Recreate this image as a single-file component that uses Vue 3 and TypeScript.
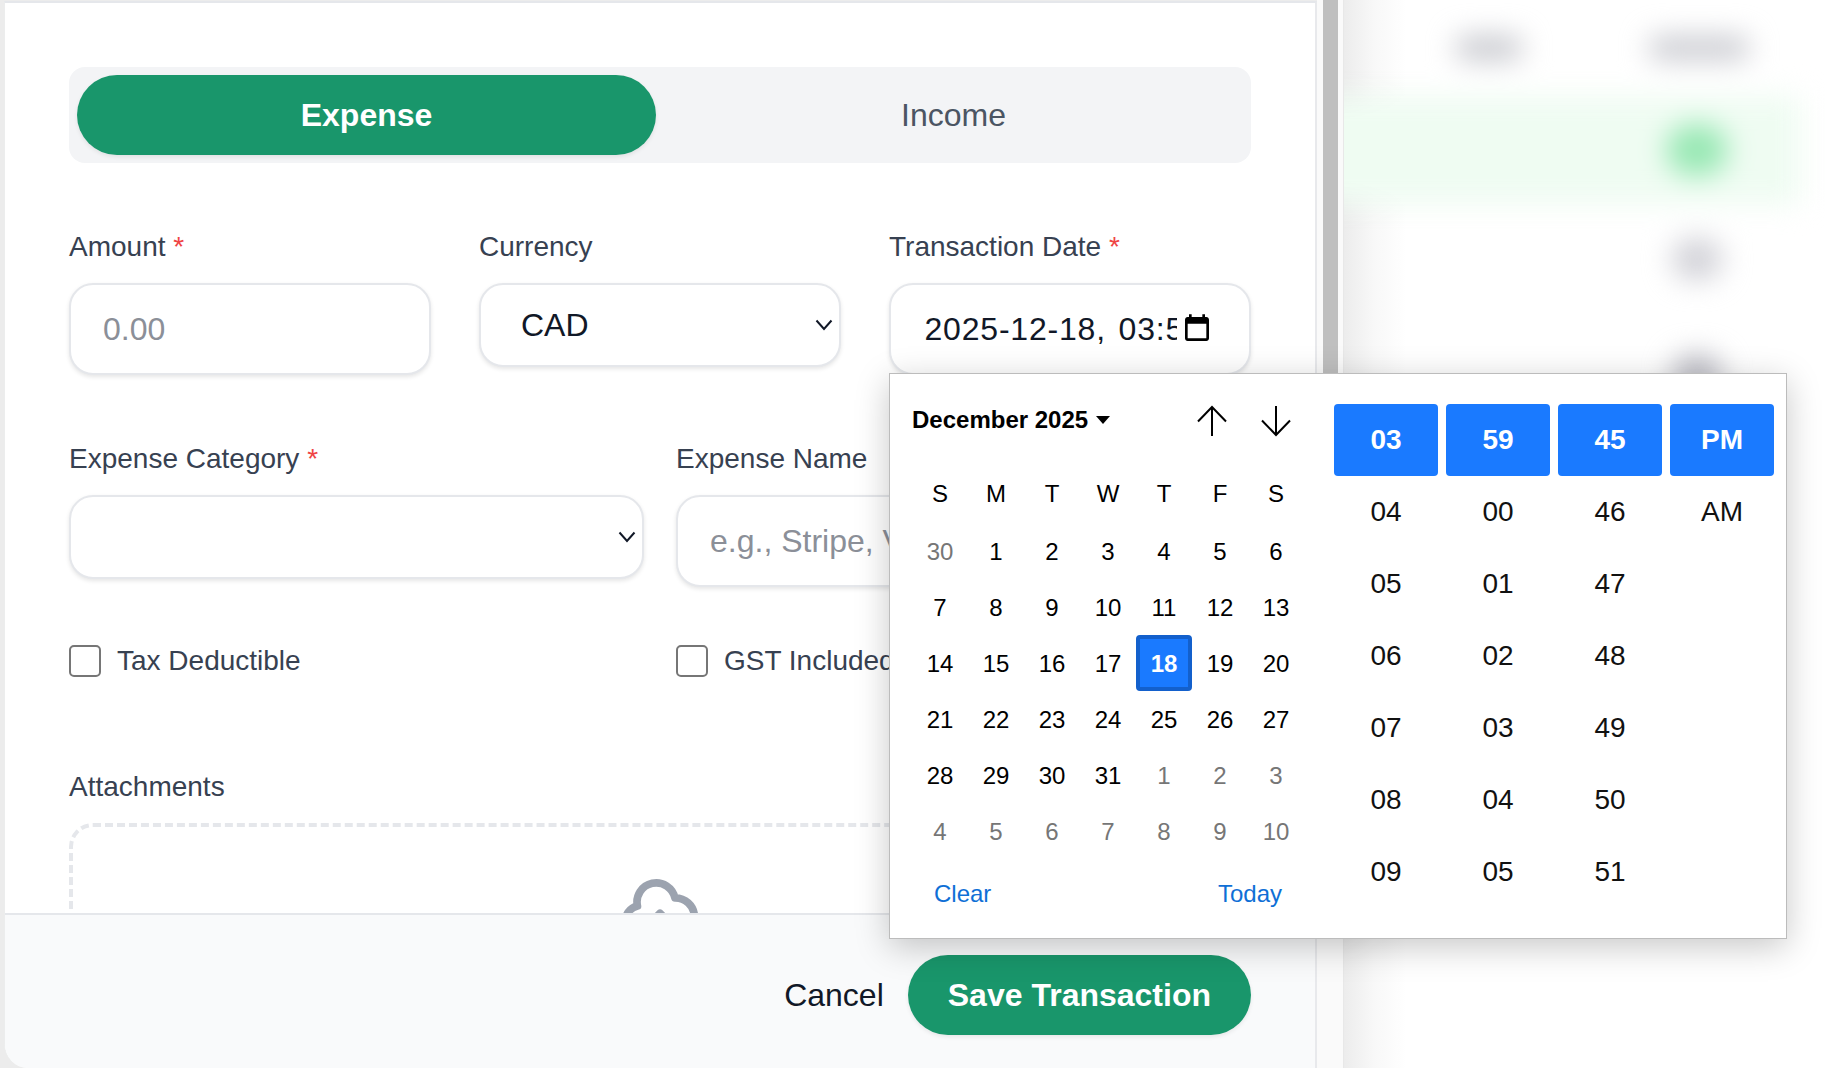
<script setup lang="ts">
// define type section
type Day = {
  label: number
  muted?: boolean
  selected?: boolean
}

type TimeColumn = {
  active: string
  rest: string[]
}

// define variable section
const weekdays: string[] = ['S', 'M', 'T', 'W', 'T', 'F', 'S']

const makeDays = (): Day[] => {
  const days: Day[] = [{ label: 30, muted: true }]
  for (let i = 1; i <= 31; i++) {
    days.push({ label: i, selected: i === 18 })
  }
  for (let i = 1; i <= 10; i++) {
    days.push({ label: i, muted: true })
  }
  return days
}
const days = makeDays()

const timeColumns: TimeColumn[] = [
  { active: '03', rest: ['04', '05', '06', '07', '08', '09'] },
  { active: '59', rest: ['00', '01', '02', '03', '04', '05'] },
  { active: '45', rest: ['46', '47', '48', '49', '50', '51'] },
  { active: 'PM', rest: ['AM'] }
]
</script>

<template>
  <div class="page">
    <div class="edge"></div>

    <div class="panel">
      <div class="scroll">
        <div class="toggle">
          <button class="toggle_btn toggle_on">Expense</button>
          <button class="toggle_btn">Income</button>
        </div>

        <div class="row_three">
          <div>
            <label class="label">Amount <span class="req">*</span></label>
            <input class="field" placeholder="0.00" />
          </div>
          <div>
            <label class="label">Currency</label>
            <div class="select">
              <span>CAD</span>
              <svg class="chevron" viewBox="0 0 18 12" width="18" height="12">
                <path d="M1.5 1.5 9 10l7.500-8.500" fill="none" stroke="#111827" stroke-width="2" />
              </svg>
            </div>
          </div>
          <div>
            <label class="label">Transaction Date <span class="req">*</span></label>
            <div class="field date_field">
              <span class="date_text">2025-12-18, 03:59:45 PM</span>
              <svg class="cal_icon" viewBox="0 0 24 24" width="32" height="32">
                <path d="M19 3h-1V1h-2v2H8V1H6v2H5c-1.110 0-1.990.9-1.990 2L3 19c0 1.100.89 2 2 2h14c1.100 0 2-.9 2-2V5c0-1.100-.9-2-2-2zm0 16H5V8h14v11z" fill="#000" />
              </svg>
            </div>
          </div>
        </div>

        <div class="row_two">
          <div>
            <label class="label">Expense Category <span class="req">*</span></label>
            <div class="select">
              <span></span>
              <svg class="chevron" viewBox="0 0 18 12" width="18" height="12">
                <path d="M1.5 1.500 9 10l7.500-8.500" fill="none" stroke="#111827" stroke-width="2" />
              </svg>
            </div>
          </div>
          <div>
            <label class="label">Expense Name</label>
            <input class="field" placeholder="e.g., Stripe, Vendor" />
          </div>
        </div>

        <div class="row_checks">
          <div class="check"><span class="check_box"></span>Tax Deductible</div>
          <div class="check"><span class="check_box"></span>GST Included</div>
        </div>

        <label class="label attach_label">Attachments</label>
        <div class="dropzone">
          <svg viewBox="0 0 24 24" width="92" height="92">
            <path
              d="M7 16a4 4 0 01-.88-7.903A5 5 0 1115.900 6L16 6a5 5 0 011 9.900M15 13l-3-3m0 0l-3 3m3-3v12"
              fill="none"
              stroke="#9ca3af"
              stroke-width="2"
              stroke-linecap="round"
              stroke-linejoin="round"
            />
          </svg>
        </div>
      </div>

      <div class="footer">
        <button class="cancel">Cancel</button>
        <button class="save">Save Transaction</button>
      </div>
    </div>

    <div class="track"><div class="thumb"></div></div>

    <!-- blurred list behind the dialog -->
    <div class="behind">
      <div class="blobs">
        <div class="blob head_a"></div>
        <div class="blob head_b"></div>
        <div class="blob green_row"></div>
        <div class="blob green_dot"></div>
        <div class="blob grey_a"></div>
        <div class="blob grey_b"></div>
      </div>
    </div>

    <!-- date picker popup -->
    <div class="popup">
      <div class="calendar">
        <div class="cal_head">
          <span class="month">December 2025</span>
          <svg class="caret" viewBox="0 0 14 8" width="14" height="8"><path d="M0 0h14L7 8z" fill="#000" /></svg>
          <span class="cal_spacer"></span>
          <svg class="arrow" viewBox="0 0 32 32" width="32" height="32">
            <path d="M16 31V2M2 16.500 16 2l14 14.500" fill="none" stroke="#000" stroke-width="2" />
          </svg>
          <svg class="arrow" viewBox="0 0 32 32" width="32" height="32">
            <path d="M16 1v29M2 15.500 16 30l14-14.500" fill="none" stroke="#000" stroke-width="2" />
          </svg>
        </div>
        <div class="cal_grid">
          <div v-for="(w, i) in weekdays" :key="'w' + i" class="cell weekday">{{ w }}</div>
          <div
            v-for="(d, i) in days"
            :key="'d' + i"
            class="cell day"
            :class="{ muted: d.muted, selected: d.selected }"
          >
            {{ d.label }}
          </div>
        </div>
        <div class="cal_foot">
          <span>Clear</span>
          <span>Today</span>
        </div>
      </div>

      <div class="times">
        <div v-for="col in timeColumns" :key="col.active" class="time_col">
          <div class="time_cell time_on">{{ col.active }}</div>
          <div v-for="t in col.rest" :key="t" class="time_cell">{{ t }}</div>
        </div>
      </div>
    </div>
  </div>
</template>

<style>
html,
body {
  margin: 0;
  background: #fff;
}
</style>

<style scoped>
.page {
  position: relative;
  display: flex;
  width: 1840px;
  height: 1068px;
  overflow: hidden;
  background: #ececec;
  font-family: "Liberation Sans", Arial, sans-serif;
  color: #111827;
}
.edge {
  width: 4px;
  flex: none;
}

/* dialog */
.panel {
  width: 1313px;
  flex: none;
  box-sizing: border-box;
  display: flex;
  flex-direction: column;
  background: #fff;
  border-top: 2px solid #e5e7eb;
  border-left: 1px solid #eceded;
  border-right: 2px solid #e8e9ec;
  margin-top: 1px;
  border-bottom-left-radius: 24px;
  overflow: hidden;
}
.scroll {
  flex: 1;
  min-height: 0;
  overflow: hidden;
  padding: 64px 64px 0;
}
.toggle {
  display: flex;
  gap: 8px;
  padding: 8px;
  background: #f3f4f6;
  border-radius: 16px;
}
.toggle_btn {
  flex: 1;
  height: 80px;
  border: 0;
  border-radius: 40px;
  background: transparent;
  font: 32px "Liberation Sans", Arial, sans-serif;
  color: #4b5563;
}
.toggle_on {
  background: #19966b;
  color: #fff;
  font-weight: 700;
  box-shadow: 0 2px 4px rgba(0, 0, 0, 0.08);
}
.row_three {
  display: grid;
  grid-template-columns: repeat(3, minmax(0, 1fr));
  gap: 48px;
  margin-top: 64px;
}
.row_two {
  display: grid;
  grid-template-columns: repeat(2, minmax(0, 1fr));
  gap: 32px;
  margin-top: 64px;
}
.label {
  display: block;
  font-size: 28px;
  line-height: 40px;
  margin-bottom: 16px;
  color: #374151;
}
.req {
  color: #ef4444;
}
.field {
  display: block;
  box-sizing: border-box;
  width: 100%;
  height: 92px;
  padding: 0 32px;
  background: #fff;
  border: 2px solid #e5e7eb;
  border-radius: 24px;
  box-shadow: 0 2px 4px rgba(0, 0, 0, 0.1);
  font: 32px "Liberation Sans", Arial, sans-serif;
  color: #111827;
  outline: none;
}
.field::placeholder {
  color: #8b8f98;
  opacity: 1;
}
.date_field {
  display: flex;
  align-items: center;
  padding: 0 36px 0 33.500px;
}
.date_text {
  flex: 1;
  min-width: 0;
  overflow: hidden;
  white-space: nowrap;
  letter-spacing: 0.8px;
  word-spacing: 3px;
}
.cal_icon {
  flex: none;
  margin-left: 4px;
}
.select {
  box-sizing: border-box;
  display: flex;
  align-items: center;
  justify-content: space-between;
  height: 84px;
  padding: 0 6px 0 40px;
  background: #fff;
  border: 2px solid #e5e7eb;
  border-radius: 24px;
  box-shadow: 0 2px 4px rgba(0, 0, 0, 0.1);
  font-size: 32px;
}
.row_checks {
  display: grid;
  grid-template-columns: repeat(2, minmax(0, 1fr));
  gap: 32px;
  margin-top: 54px;
}
.check {
  display: flex;
  align-items: center;
  gap: 16px;
  height: 40px;
  font-size: 28px;
  color: #374151;
  white-space: nowrap;
}
.check_box {
  box-sizing: border-box;
  width: 32px;
  height: 32px;
  flex: none;
  border: 2px solid #767676;
  border-radius: 5px;
  background: #fff;
}
.attach_label {
  margin-top: 86px;
}
.dropzone {
  box-sizing: border-box;
  height: 320px;
  border: 4px dashed #e5e7eb;
  border-radius: 24px;
  display: flex;
  justify-content: center;
  padding-top: 48px;
}
.footer {
  flex: none;
  box-sizing: border-box;
  height: 155px;
  display: flex;
  justify-content: flex-end;
  align-items: flex-start;
  gap: 24px;
  padding: 40px 64px 0;
  background: #f9fafb;
  border-top: 2px solid #e5e7eb;
}
.cancel {
  height: 80px;
  padding: 0;
  border: 0;
  background: transparent;
  font: 32px "Liberation Sans", Arial, sans-serif;
  color: #111827;
}
.save {
  height: 80px;
  padding: 0 40px;
  border: 0;
  border-radius: 40px;
  background: #19966b;
  color: #fff;
  font: 700 32px "Liberation Sans", Arial, sans-serif;
  box-shadow: 0 2px 4px rgba(0, 0, 0, 0.08);
}

/* scrollbar of the dialog */
.track {
  width: 27px;
  flex: none;
  box-sizing: border-box;
  padding: 0 5px 0 6px;
  background: #fafafa;
  border-right: 1px solid #e8e8e8;
}
.thumb {
  height: 640px;
  background: #bfbfbf;
}

/* page behind */
.behind {
  position: relative;
  flex: 1;
  overflow: hidden;
  background: linear-gradient(90deg, #ececec, #f8f8f8 30px, #fff 62px);
}
.blobs {
  position: absolute;
  inset: 0;
  filter: blur(14px);
}
.blob {
  position: absolute;
}
.head_a {
  left: 112px;
  top: 36px;
  width: 66px;
  height: 24px;
  border-radius: 10px;
  background: #c6c7cd;
}
.head_b {
  left: 305px;
  top: 36px;
  width: 100px;
  height: 24px;
  border-radius: 10px;
  background: #c9cad0;
}
.green_row {
  left: -40px;
  top: 96px;
  width: 496px;
  height: 108px;
  background: #effcf2;
}
.green_dot {
  left: 322px;
  top: 124px;
  width: 62px;
  height: 52px;
  border-radius: 26px;
  background: #98e8b4;
}
.grey_a {
  left: 328px;
  top: 238px;
  width: 50px;
  height: 42px;
  border-radius: 20px;
  background: #d2d2d8;
}
.grey_b {
  left: 328px;
  top: 354px;
  width: 50px;
  height: 42px;
  border-radius: 20px;
  background: #bebec6;
}

/* popup */
.popup {
  position: absolute;
  left: 889px;
  top: 373px;
  box-sizing: border-box;
  width: 898px;
  height: 566px;
  display: flex;
  padding: 30px 11px 0 22px;
  background: #fff;
  border: 1px solid #bcbcbc;
  box-shadow: 0 8px 32px rgba(0, 0, 0, 0.22);
  color: #000;
}
.calendar {
  width: 392px;
  flex: none;
}
.cal_head {
  display: flex;
  align-items: center;
  height: 32px;
  margin-bottom: 31px;
}
.month {
  font-size: 24px;
  font-weight: 700;
}
.caret {
  margin-left: 8px;
}
.cal_spacer {
  flex: 1;
}
.arrow {
  margin-top: 2px;
  margin-right: 12px;
  margin-left: 20px;
}
.cal_grid {
  display: grid;
  grid-template-columns: repeat(7, 56px);
  grid-auto-rows: 56px;
}
.cell {
  display: flex;
  align-items: center;
  justify-content: center;
  font-size: 24px;
  box-sizing: border-box;
}
.weekday {
  padding-bottom: 2px;
}
.day {
  padding-top: 2px;
}
.muted {
  color: #767676;
}
.selected {
  background: #1a7aff;
  border: 4px solid #1360cc;
  border-radius: 4px;
  color: #fff;
  font-weight: 700;
}
.cal_foot {
  display: flex;
  justify-content: space-between;
  margin-top: 21px;
  padding: 0 22px;
  font-size: 24px;
  line-height: 28px;
  color: #0f6fd6;
}
.times {
  display: flex;
  gap: 8px;
  margin-left: 30px;
}
.time_col {
  width: 104px;
}
.time_cell {
  height: 72px;
  display: flex;
  align-items: center;
  justify-content: center;
  font-size: 28px;
  color: #111;
}
.time_on {
  background: #1a7aff;
  border-radius: 4px;
  color: #fff;
  font-weight: 700;
}
</style>
